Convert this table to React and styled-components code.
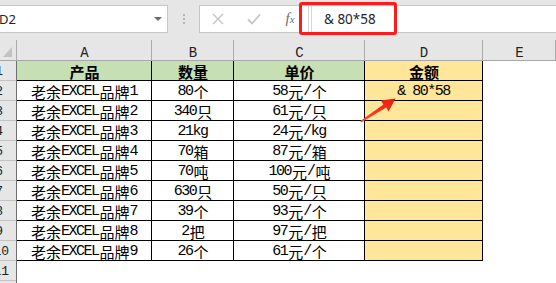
import React from 'react'
import styled, { createGlobalStyle } from 'styled-components';

const ProductData = [
    { id: 2, name: '老余EXCEL品牌1', qty: '80个', price: '58元/个', total: '& 80*58' },
    { id: 3, name: '老余EXCEL品牌2', qty: '340只', price: '61元/只', total: '' },
    { id: 4, name: '老余EXCEL品牌3', qty: '21kg', price: '24元/kg', total: '' },
    { id: 5, name: '老余EXCEL品牌4', qty: '70箱', price: '87元/箱', total: '' },
    { id: 6, name: '老余EXCEL品牌5', qty: '70吨', price: '100元/吨', total: '' },
    { id: 7, name: '老余EXCEL品牌6', qty: '630只', price: '50元/只', total: '' },
    { id: 8, name: '老余EXCEL品牌7', qty: '39个', price: '93元/个', total: '' },
    { id: 9, name: '老余EXCEL品牌8', qty: '2把', price: '97元/把', total: '' },
    { id: 10, name: '老余EXCEL品牌9', qty: '26个', price: '61元/个', total: '' },
];

const COLS = '17px 135px 82px 131px 118px 1fr';

// split ascii / cjk so the half-width letters get a mono face like SimSun
const Mixed = ({ text, bold }) => {
    const parts = text.match(/[\x00-\x7f]+|[^\x00-\x7f]+/g) || [];
    return parts.map((p, i) => (
        <Run key={i} $latin={/^[\x00-\x7f]/.test(p)} $bold={bold}>{p}</Run>
    ));
};

const App = () => {
    return (
        <>
            <GlobalStyle />
            <Page>
                <Toolbar>
                    <NameBox>
                        <span>D2</span>
                        <Caret />
                    </NameBox>
                    <Grip>
                        <i /><i /><i />
                    </Grip>
                    <FormulaBox>
                        <ToolBtn>
                            <svg width="12" height="12" viewBox="0 0 12 12">
                                <path d="M1 1L11 11M11 1L1 11" stroke="#c4c4c4" strokeWidth="1.4" fill="none" />
                            </svg>
                        </ToolBtn>
                        <ToolBtn>
                            <svg width="14" height="12" viewBox="0 0 14 12">
                                <path d="M1 6.5L5 10.5L13 1.5" stroke="#c4c4c4" strokeWidth="1.8" fill="none" />
                            </svg>
                        </ToolBtn>
                        <ToolBtn>
                            <Fx>f<small>x</small></Fx>
                        </ToolBtn>
                        <Splitter />
                        <FormulaText>&amp; 80*58</FormulaText>
                    </FormulaBox>
                    <Highlight />
                </Toolbar>

                <HeaderRow>
                    <Corner>
                        <svg width="11" height="12" viewBox="0 0 11 12">
                            <path d="M10 1L10 11L1 11Z" fill="#c2c2c2" />
                        </svg>
                    </Corner>
                    {['A', 'B', 'C', 'D', 'E'].map((c) => (
                        <ColHead key={c}>{c}</ColHead>
                    ))}
                </HeaderRow>

                <SheetRow>
                    <RowHead>1</RowHead>
                    <Cell $bg="#c6e0b4"><Mixed text="产品" bold /></Cell>
                    <Cell $bg="#c6e0b4"><Mixed text="数量" bold /></Cell>
                    <Cell $bg="#c6e0b4"><Mixed text="单价" bold /></Cell>
                    <Cell $bg="#ffe699"><Mixed text="金额" bold /></Cell>
                    <Blank />
                </SheetRow>
                {ProductData.map((data) => (
                    <SheetRow key={data.id}>
                        <RowHead $wide={data.id > 9}>{data.id}</RowHead>
                        <Cell><Mixed text={data.name} /></Cell>
                        <Cell><Mixed text={data.qty} /></Cell>
                        <Cell><Mixed text={data.price} /></Cell>
                        <Cell $bg="#ffe699"><Mixed text={data.total} /></Cell>
                        <Blank />
                    </SheetRow>
                ))}
                {[11, 12].map((n) => (
                    <SheetRow key={n}>
                        <RowHead $wide>{n}</RowHead>
                        <EmptyArea />
                    </SheetRow>
                ))}

                <Arrow width="44" height="32" viewBox="0 0 44 32">
                    <defs>
                        <linearGradient id="ar" x1="0" y1="1" x2="1" y2="0">
                            <stop offset="0" stopColor="#ff4a30" />
                            <stop offset="1" stopColor="#ec1b0e" />
                        </linearGradient>
                    </defs>
                    <path d="M5.3 27 L28.4 10.6 L26 6.6 L40.5 4.5 L33.6 17.4 L31.2 13.4 L6.1 28.4 Z" fill="url(#ar)" />
                </Arrow>
            </Page>
        </>
    )
}

export default App

const GlobalStyle = createGlobalStyle`
body{
    margin:0;
    background:#fff;
    overflow:hidden;
}
`;

const Page = styled.div`
position:relative;
width:556px;
height:283px;
overflow:hidden;
background:#fff;
`;

const Toolbar = styled.div`
position:relative;
height:40px;
display:flex;
align-items:flex-start;
padding-top:5px;
box-sizing:border-box;
background:#e6e6e6;
`;

const NameBox = styled.div`
width:168px;
height:28px;
box-sizing:border-box;
border:1px solid #c6c6c6;
border-left:none;
background:#fff;
display:flex;
align-items:center;
justify-content:space-between;
padding-right:5px;

span{
    font-family:"Noto Sans", sans-serif;
    font-size:13px;
    color:#222;
    margin-left:-1px;
}
`;

const Caret = styled.div`
width:0;
height:0;
border-left:4px solid transparent;
border-right:4px solid transparent;
border-top:4px solid #6b6b6b;
`;

const Grip = styled.div`
width:31px;
height:28px;
display:flex;
flex-direction:column;
align-items:center;
justify-content:center;
gap:2px;

i{
    width:2px;
    height:2px;
    background:#b4b4b4;
}
`;

const FormulaBox = styled.div`
flex:1;
height:28px;
box-sizing:border-box;
border:1px solid #c6c6c6;
border-right:none;
background:#fff;
display:flex;
align-items:center;
`;

const ToolBtn = styled.div`
width:36px;
height:100%;
display:flex;
align-items:center;
justify-content:center;
`;

const Fx = styled.span`
font-family:"Liberation Serif", serif;
font-style:italic;
font-size:15px;
color:#6e6e6e;
margin-top:-2px;

small{
    font-size:11px;
}
`;

const Splitter = styled.div`
width:2px;
height:26px;
border-left:1px solid #d6d6d6;
border-right:1px solid #d6d6d6;
`;

const FormulaText = styled.div`
padding-left:12px;
font-family:"Noto Sans", sans-serif;
font-size:13.5px;
color:#1f2430;
`;

const Highlight = styled.div`
position:absolute;
left:299px;
top:2px;
width:98px;
height:33px;
box-sizing:border-box;
border:3px solid #ff1b1b;
border-radius:3px;
`;

const HeaderRow = styled.div`
display:grid;
grid-template-columns:${COLS};
grid-template-rows:20px;
height:21px;
box-sizing:border-box;
border-bottom:1px solid #a8a8a8;
background:#e6e6e6;
`;

const Corner = styled.div`
box-shadow:inset -1px 0 0 #ababab;
display:flex;
align-items:flex-end;
padding:0 0 2px 2px;
`;

const ColHead = styled.div`
box-shadow:inset -1px 0 0 #ababab;
display:flex;
align-items:center;
justify-content:center;
padding-top:5px;
line-height:16px;
font-family:"Liberation Mono", monospace;
font-size:14px;
color:#222;
`;

const SheetRow = styled.div`
display:grid;
grid-template-columns:${COLS};
grid-template-rows:20px;
height:20px;
overflow:hidden;
`;

const RowHead = styled.div`
overflow:hidden;
display:flex;
align-items:center;
justify-content:flex-end;
padding-right:${(p) => (p.$wide ? '8px' : '14px')};
box-sizing:border-box;
background:#e6e6e6;
box-shadow:inset -1px 0 0 #6f6f6f, inset 0 -1px 0 #c4c4c4;
line-height:19px;
font-family:"Liberation Mono", monospace;
font-size:13px;
color:#222;
white-space:nowrap;
`;

const Cell = styled.div`
display:flex;
align-items:center;
justify-content:center;
white-space:nowrap;
overflow:hidden;
line-height:19px;
background:${(p) => p.$bg || '#fff'};
box-shadow:inset -1px -1px 0 #000;
color:#000;
`;

const Run = styled.span`
font-family:${(p) => (p.$latin ? '"Liberation Mono", monospace' : '"Noto Sans CJK SC", sans-serif')};
font-size:15px;
letter-spacing:${(p) => (p.$latin ? '-1.5px' : '0')};
padding-right:${(p) => (p.$latin ? '1px' : '0')};
vertical-align:${(p) => (p.$latin ? '-1px' : 'baseline')};
font-weight:${(p) => (p.$bold ? 700 : 400)};
line-height:19px;
white-space:pre;
`;

const Blank = styled.div`
background:#fff;
`;

const EmptyArea = styled.div`
grid-column:2 / -1;
background:#fff;
`;

const Arrow = styled.svg`
position:absolute;
left:355px;
top:94px;
`;
